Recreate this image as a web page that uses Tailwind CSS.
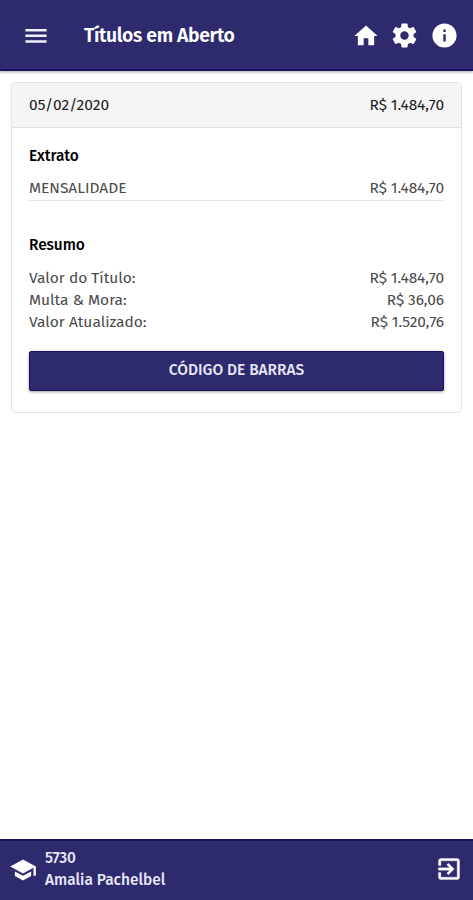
<!DOCTYPE html>
<html lang="pt-BR">
<head>
    <meta charset="UTF-8">
    <meta name="viewport" content="width=device-width, initial-scale=1.0">
    <title>Títulos em Aberto</title>
    <script src="https://cdn.jsdelivr.net/npm/@tailwindcss/browser@4"></script>
</head>
<body class="bg-white font-['Fira_Sans','Noto_Sans',sans-serif] text-[15.5px]">
<div class="flex h-[900px] w-[473px] flex-col">

    <header class="flex h-[71px] shrink-0 items-center border-b-2 border-[#1a1460] bg-[#2e2a6e] pt-[2px] pr-[14px] pl-[25px] text-white shadow-[0_1px_3px_rgba(0,0,0,0.35)]">
        <svg class="h-[14px] w-[22px] shrink-0" viewBox="0 0 22 14" fill="#f0f0fa"><path d="M.4 0h21.2v2.5H.4zM.4 5.6h21.2v2.5H.4zM.4 11.2h21.2v2.5H.4z"/></svg>
        <h1 class="ml-[37px] flex-1 pt-px text-[19.4px] font-semibold tracking-[-0.37px] whitespace-nowrap">Títulos em Aberto</h1>
        <div class="flex items-center gap-[11px]">
            <svg class="-mr-px h-7 w-7" viewBox="0 0 24 24" fill="currentColor"><path d="M10 20v-6h4v6h5v-8h3L12 3 2 12h3v8z"/></svg>
            <svg class="h-[29px] w-[29px]" viewBox="0 0 24 24" fill="currentColor"><path d="M19.43 12.98c.04-.32.07-.64.07-.98s-.03-.66-.07-.98l2.11-1.65c.19-.15.24-.42.12-.64l-2-3.46c-.12-.22-.39-.3-.61-.22l-2.49 1c-.52-.4-1.08-.73-1.69-.98l-.38-2.65C14.46 2.18 14.25 2 14 2h-4c-.25 0-.46.18-.49.42l-.38 2.65c-.61.25-1.17.59-1.69.98l-2.49-1c-.23-.09-.49 0-.61.22l-2 3.46c-.13.22-.07.49.12.64l2.11 1.65c-.04.32-.07.65-.07.98s.03.66.07.98l-2.11 1.65c-.19.15-.24.42-.12.64l2 3.46c.12.22.39.3.61.22l2.49-1c.52.4 1.08.73 1.69.98l.38 2.65c.03.24.24.42.49.42h4c.25 0 .46-.18.49-.42l.38-2.65c.61-.25 1.17-.59 1.69-.98l2.49 1c.23.09.49 0 .61-.22l2-3.46c.12-.22.07-.49-.12-.64l-2.11-1.65zM12 15.5c-1.93 0-3.5-1.57-3.5-3.5s1.57-3.5 3.5-3.5 3.5 1.57 3.5 3.5-1.57 3.5-3.5 3.5z"/></svg>
            <svg class="h-[29px] w-[29px]" viewBox="0 0 24 24" fill="currentColor"><path d="M12 2C6.48 2 2 6.48 2 12s4.48 10 10 10 10-4.48 10-10S17.52 2 12 2zm1 15h-2v-6h2v6zm0-8h-2V7h2v2z"/></svg>
        </div>
    </header>

    <main class="flex-1 px-[11px] pt-[11px]">
        <section class="h-[331px] overflow-hidden rounded-[5px] border-[1.5px] border-[#e2e2e2] text-[#4a4a4a]">
            <div class="flex h-[45px] items-center justify-between border-b border-[#e2e2e2] bg-[#f5f5f5] px-[17px] pt-px text-[#1c1c1c]">
                <span>05/02/2020</span>
                <span class="tracking-[-0.1px]">R$ 1.484,70</span>
            </div>
            <div class="px-[17px] pt-[17px]">
                <h2 class="leading-[22px] font-medium tracking-[-0.1px] text-black">Extrato</h2>
                <div class="mt-[10px] flex justify-between border-b border-[#e4e4e4] pb-px leading-[22px]">
                    <span>MENSALIDADE</span>
                    <span class="tracking-[-0.1px]">R$ 1.484,70</span>
                </div>
                <h2 class="mt-[33px] leading-[22px] font-medium tracking-[-0.1px] text-black">Resumo</h2>
                <div class="mt-[11px] leading-[22px]">
                    <div class="flex justify-between">
                        <span>Valor do Título:</span>
                        <span class="tracking-[-0.1px]">R$ 1.484,70</span>
                    </div>
                    <div class="flex justify-between">
                        <span>Multa &amp; Mora:</span>
                        <span class="tracking-[-0.1px]">R$ 36,06</span>
                    </div>
                    <div class="flex justify-between">
                        <span>Valor Atualizado:</span>
                        <span class="tracking-[-0.1px]">R$ 1.520,76</span>
                    </div>
                </div>
                <button class="mt-[18px] flex h-10 w-full items-center justify-center rounded-[2px] border border-[#1a1460] bg-[#2e2a6e] font-medium text-[#e4e4f2] shadow-[0_1px_3px_rgba(0,0,0,0.4)]">CÓDIGO DE BARRAS</button>
            </div>
        </section>
    </main>

    <footer class="flex h-[61px] shrink-0 items-center border-t-2 border-[#1a1460] bg-[#2e2a6e] pr-[10px] pb-1 pl-[9px] text-[#e6e6f4]">
        <svg class="mt-[2px] h-7 w-7 shrink-0 text-white" viewBox="0 0 24 24" fill="currentColor"><path d="M5 13.18v4L12 21l7-3.82v-4L12 17l-7-3.82zM12 3L1 9l11 6 9-4.91V17h2V9L12 3z"/></svg>
        <div class="ml-2 flex-1 leading-[22px] font-medium">
            <div class="tracking-[-0.2px]">5730</div>
            <div>Amalia Pachelbel</div>
        </div>
        <svg class="h-7 w-7 text-white" viewBox="0 0 24 24" fill="currentColor" stroke="currentColor" stroke-width=".3"><path d="M10.09 15.59L11.5 17l5-5-5-5-1.41 1.41L12.67 11H3v2h9.67l-2.58 2.59zM19 3H5c-1.11 0-2 .9-2 2v4h2V5h14v14H5v-4H3v4c0 1.1.89 2 2 2h14c1.1 0 2-.9 2-2V5c0-1.1-.9-2-2-2z"/></svg>
    </footer>

</div>
</body>
</html>
